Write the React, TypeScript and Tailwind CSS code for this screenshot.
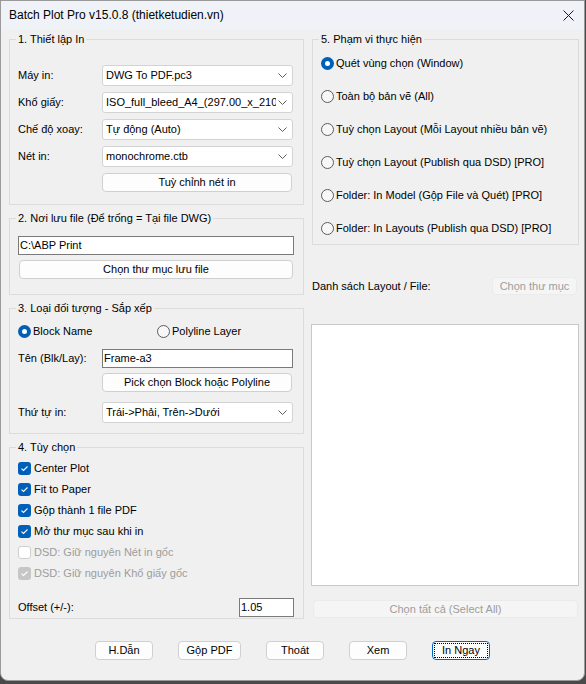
import React from "react";

const Chevron = () => (
    <svg width="9" height="5" viewBox="0 0 9 5" className="shrink-0">
        <path d="M0.5 0.5 L4.5 4.5 L8.5 0.5" fill="none" stroke="#5f5f5f" strokeWidth="1" />
    </svg>
);

const Combo = ({ value }: { value: string }) => (
    <div className="flex h-[21px] w-[191px] items-center rounded-[3px] border border-[#d3d3d3] bg-white pl-[3px] pr-[5px]">
        <span className="flex-1 overflow-hidden whitespace-nowrap">{value}</span>
        <span className="ml-[2px]"><Chevron /></span>
    </div>
);

const TextBox = ({ value, className = "" }: { value: string; className?: string }) => (
    <div className={`flex h-[19px] items-center border border-[#7a7a7a] bg-white pl-[1px] whitespace-nowrap ${className}`}>
        {value}
    </div>
);

const Btn = ({ label, className = "" }: { label: string; className?: string }) => (
    <div className={`flex h-[19px] items-center justify-center rounded-[4px] border border-[#d0d0d0] bg-[#fdfdfd] ${className}`}>
        {label}
    </div>
);

const DisabledBtn = ({ label, className = "" }: { label: string; className?: string }) => (
    <div className={`flex h-[18px] items-center justify-center rounded-[4px] border border-[#ebebeb] bg-[#f5f5f5] text-[#9d9d9d] ${className}`}>
        {label}
    </div>
);

const Radio = ({ checked, label }: { checked?: boolean; label: string }) => (
    <div className="flex h-[16px] items-center gap-[2px] whitespace-nowrap">
        {checked ? (
            <span className="flex h-[13px] w-[13px] items-center justify-center rounded-full bg-[#005fb8]">
                <span className="h-[5px] w-[5px] rounded-full bg-white" />
            </span>
        ) : (
            <span className="h-[13px] w-[13px] rounded-full border border-[#5c5c5c] bg-[#f7f7f7]" />
        )}
        <span>{label}</span>
    </div>
);

const Check = ({ label, checked, disabled }: { label: string; checked?: boolean; disabled?: boolean }) => {
    let box = "bg-[#005fb8]";
    if (disabled) box = checked ? "bg-[#c6c6c6]" : "bg-white border border-[#cfcfcf]";
    return (
        <div className={`flex h-[21px] items-center gap-[3px] ${disabled ? "text-[#9d9d9d]" : ""}`}>
            <span className={`flex h-[13px] w-[13px] items-center justify-center rounded-[3px] ${box}`}>
                {checked && (
                    <svg width="9" height="7" viewBox="0 0 9 7">
                        <path d="M1.5 3.6 L3.5 5.5 L7.5 1.5" fill="none" stroke="white" strokeWidth="1.1" />
                    </svg>
                )}
            </span>
            <span>{label}</span>
        </div>
    );
};

const Group = ({ title, className = "", children }: { title: string; className?: string; children: React.ReactNode }) => (
    <fieldset className={`border border-[#dcdcdc] pl-[8px] pr-[9px] ${className}`}>
        <legend className="-ml-[2px] px-[2px] leading-[16px]">{title}</legend>
        {children}
    </fieldset>
);

const Row = ({ label, children }: { label: string; children: React.ReactNode }) => (
    <div className="flex items-center">
        <span className="w-[84px] shrink-0">{label}</span>
        {children}
    </div>
);

export default function App() {
    return (
        <div className="h-[684px] w-[586px] bg-[#4a4a4a] font-['Liberation_Sans',Arial,sans-serif] text-[11px] text-black">
            <div className="flex h-[681px] w-[585px] flex-col overflow-hidden rounded-b-[8px] border border-[#9a9a9a] bg-[#f0f0f0]">
                {/* title bar */}
                <div className="flex h-[28px] shrink-0 items-center bg-[#eff3f8] pl-[8px] pr-[10px] text-[12px]">
                    <span className="flex-1">Batch Plot Pro v15.0.8 (thietketudien.vn)</span>
                    <svg width="11" height="11" viewBox="0 0 11 11">
                        <path d="M0.5 0.5 L10.5 10.5 M10.5 0.5 L0.5 10.5" stroke="#1a1a1a" strokeWidth="1" />
                    </svg>
                </div>

                <div className="flex gap-[8px] pl-[8px] pt-[2px]">
                    {/* left column */}
                    <div className="flex w-[295px] flex-col">
                        <Group title="1. Thiết lập In" className="pb-[12px] pt-[18px]">
                            <div className="flex flex-col gap-[6px]">
                                <Row label="Máy in:"><Combo value="DWG To PDF.pc3" /></Row>
                                <Row label="Khổ giấy:"><Combo value="ISO_full_bleed_A4_(297.00_x_210.00_MM)" /></Row>
                                <Row label="Chế độ xoay:"><Combo value="Tự động (Auto)" /></Row>
                                <Row label="Nét in:"><Combo value="monochrome.ctb" /></Row>
                                <Row label=""><Btn label="Tuỳ chỉnh nét in" className="w-[190px]" /></Row>
                            </div>
                        </Group>

                        <Group title="2. Nơi lưu file (Để trống = Tại file DWG)" className="mt-[5px] pb-[15px] pt-[10px]">
                            <TextBox value="C:\ABP Print" />
                            <Btn label="Chọn thư mục lưu file" className="mx-[1px] mt-[5px]" />
                        </Group>

                        <Group title="3. Loại đối tượng - Sắp xếp" className="mt-[5px] pb-[10px] pt-[7px]">
                            <div className="flex">
                                <div className="w-[139px]"><Radio checked label="Block Name" /></div>
                                <Radio label="Polyline Layer" />
                            </div>
                            <div className="mt-[10px]">
                                <Row label="Tên (Blk/Lay):"><TextBox value="Frame-a3" className="w-[191px]" /></Row>
                            </div>
                            <div className="mt-[5px]">
                                <Row label=""><Btn label="Pick chọn Block hoặc Polyline" className="w-[190px]" /></Row>
                            </div>
                            <div className="mt-[10px]">
                                <Row label="Thứ tự in:"><Combo value="Trái->Phải, Trên->Dưới" /></Row>
                            </div>
                        </Group>

                        <Group title="4. Tùy chọn" className="mt-[5px] pb-[1px] pt-[3px]">
                            <Check checked label="Center Plot" />
                            <Check checked label="Fit to Paper" />
                            <Check checked label="Gộp thành 1 file PDF" />
                            <Check checked label="Mở thư mục sau khi in" />
                            <Check disabled label="DSD: Giữ nguyên Nét in gốc" />
                            <Check disabled checked label="DSD: Giữ nguyên Khổ giấy gốc" />
                            <div className="mt-[14px] flex items-center justify-between">
                                <span>Offset (+/-):</span>
                                <TextBox value="1.05" className="w-[55px]" />
                            </div>
                        </Group>
                    </div>

                    {/* right column */}
                    <div className="flex w-[267px] flex-col">
                        <Group title="5. Phạm vi thực hiện" className="pb-[8px] pt-[8px]">
                            <div className="flex flex-col gap-[17px]">
                                <Radio checked label="Quét vùng chọn (Window)" />
                                <Radio label="Toàn bộ bản vẽ (All)" />
                                <Radio label="Tuỳ chọn Layout (Mỗi Layout nhiều bản vẽ)" />
                                <Radio label="Tuỳ chọn Layout (Publish qua DSD) [PRO]" />
                                <Radio label="Folder: In Model (Gộp File và Quét) [PRO]" />
                                <Radio label="Folder: In Layouts (Publish qua DSD) [PRO]" />
                            </div>
                        </Group>

                        <div className="mt-[32px] flex items-center justify-between pr-[2px]">
                            <span>Danh sách Layout / File:</span>
                            <DisabledBtn label="Chọn thư mục" className="w-[85px]" />
                        </div>

                        <div className="-ml-[1px] mt-[29px] h-[262px] border border-[#c8c8c8] bg-white" />

                        <DisabledBtn label="Chọn tất cả (Select All)" className="mx-[1px] mt-[14px]" />
                    </div>
                </div>

                {/* bottom buttons */}
                <div className="mt-[22px] flex justify-center gap-[25px]">
                    <Btn label="H.Dẫn" className="w-[58px]" />
                    <Btn label="Gộp PDF" className="w-[63px]" />
                    <Btn label="Thoát" className="w-[58px]" />
                    <Btn label="Xem" className="w-[58px]" />
                    <div className="flex h-[19px] w-[58px] items-center justify-center rounded-[4px] border border-[#0067c0] bg-[#fdfdfd] p-[1px]">
                        <span className="flex h-full w-full items-center justify-center border border-dotted border-black">In Ngay</span>
                    </div>
                </div>
            </div>
        </div>
    );
}
